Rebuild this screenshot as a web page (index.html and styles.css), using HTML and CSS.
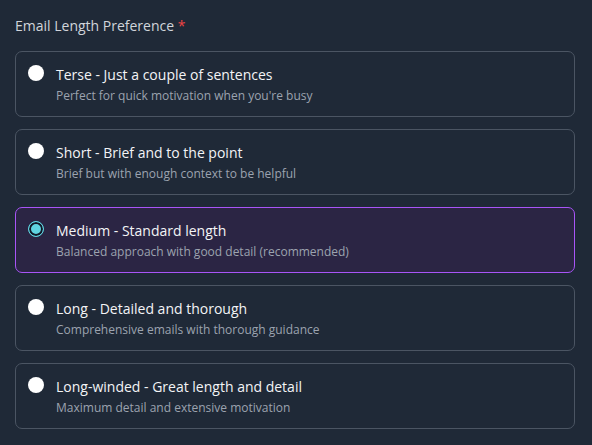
FILE: index.html
```html
<!DOCTYPE html>
<html lang="en">
<head>
<meta charset="utf-8">
<title>Email Length Preference</title>
<link rel="stylesheet" href="styles.css">
</head>
<body>
<div class="field">
  <div class="label">Email Length Preference <span class="req">*</span></div>
  <div class="options">
    <label class="option">
      <span class="radio"></span>
      <span class="text">
        <span class="title">Terse - Just a couple of sentences</span>
        <span class="desc">Perfect for quick motivation when you're busy</span>
      </span>
    </label>
    <label class="option">
      <span class="radio"></span>
      <span class="text">
        <span class="title">Short - Brief and to the point</span>
        <span class="desc">Brief but with enough context to be helpful</span>
      </span>
    </label>
    <label class="option selected">
      <span class="radio checked"></span>
      <span class="text">
        <span class="title">Medium - Standard length</span>
        <span class="desc">Balanced approach with good detail (recommended)</span>
      </span>
    </label>
    <label class="option">
      <span class="radio"></span>
      <span class="text">
        <span class="title">Long - Detailed and thorough</span>
        <span class="desc">Comprehensive emails with thorough guidance</span>
      </span>
    </label>
    <label class="option">
      <span class="radio"></span>
      <span class="text">
        <span class="title">Long-winded - Great length and detail</span>
        <span class="desc">Maximum detail and extensive motivation</span>
      </span>
    </label>
  </div>
</div>
</body>
</html>
```
FILE: styles.css
```css
html, body {
  margin: 0;
  padding: 0;
  background: #1f2937;
  font-family: "Open Sans", "Noto Sans", sans-serif;
}
.field {
  padding: 15px 17px 0 15px;
}
.label {
  font-size: 14px;
  line-height: 22px;
  color: #d1d5db;
  margin-bottom: 14px;
}
.req {
  color: #ef4444;
}
.options {
  display: flex;
  flex-direction: column;
  gap: 12px;
}
.option {
  display: flex;
  align-items: flex-start;
  gap: 12px;
  height: 66px;
  box-sizing: border-box;
  padding: 12px 12px;
  border: 1px solid #4b5563;
  border-radius: 7px;
}
.option.selected {
  background: #2b2544;
  border-color: #a855f7;
}
.radio {
  flex: none;
  width: 16px;
  height: 16px;
  margin-top: 1px;
  border-radius: 50%;
  background: #ffffff;
  box-sizing: border-box;
}
.radio.checked {
  background: #5fd3e0;
  border: 1px solid #5fd3e0;
  box-shadow: inset 0 0 0 2px #111827;
}
.text {
  display: flex;
  flex-direction: column;
}
.title {
  font-size: 14px;
  line-height: 20px;
  color: #f3f4f6;
  margin-top: 1px;
}
.desc {
  font-size: 12px;
  line-height: 16px;
  margin-top: 3px;
  color: #9ca3af;
}
```
